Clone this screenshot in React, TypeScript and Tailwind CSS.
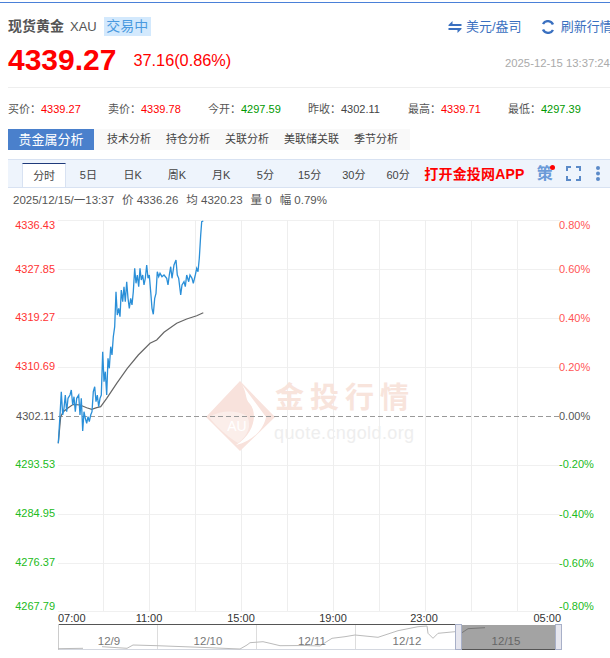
const sans = "font-['Liberation_Sans','Noto_Sans_CJK_SC',sans-serif]"

const stats = [
  { label: '买价：', value: '4339.27', color: 'text-[#f00]' },
  { label: '卖价：', value: '4339.78', color: 'text-[#f00]' },
  { label: '今开：', value: '4297.59', color: 'text-[#090]' },
  { label: '昨收：', value: '4302.11', color: 'text-[#444]' },
  { label: '最高：', value: '4339.71', color: 'text-[#f00]' },
  { label: '最低：', value: '4297.39', color: 'text-[#090]' },
]

const analysisTabs = ['技术分析', '持仓分析', '关联分析', '美联储关联', '季节分析']
const periods = ['分时', '5日', '日K', '周K', '月K', '5分', '15分', '30分', '60分']

// traced from the chart, in 3x crop coordinates with the origin at (40, 215)
const pricePts = [
  [55,685],[60,600],[64,530],[68,600],[72,580],[76,540],[80,590],[84,550],[90,540],[94,525],[98,570],[102,545],
  [106,590],[110,550],[116,540],[120,600],[124,550],[128,648],[132,590],[136,610],[140,625],[144,605],[148,620],
  [152,600],[156,590],[160,530],[164,515],[168,560],[172,540],[176,575],[180,550],[184,540],[188,410],[192,500],
  [196,470],[200,540],[204,430],[208,460],[212,395],[216,420],[220,365],[224,335],[228,230],[232,300],[236,280],
  [240,305],[244,225],[248,260],[252,215],[256,260],[260,200],[264,250],[268,280],[272,250],[276,270],[280,230],
  [284,160],[288,205],[292,180],[296,215],[300,160],[304,195],[308,180],[312,210],[316,190],[320,150],[324,190],
  [328,180],[332,230],[336,280],[340,298],[344,250],[348,235],[352,170],[356,185],[360,175],[366,185],[372,180],
  [380,190],[384,210],[388,180],[392,155],[396,190],[402,150],[408,135],[412,180],[416,190],[422,240],[426,210],
  [432,200],[436,215],[440,180],[446,200],[450,180],[456,190],[460,205],[466,180],[470,160],[474,170],[478,130],
  [482,60],[485,20],[490,18],
]
const avgPts = [
  [55,685],[62,605],[70,590],[85,578],[100,568],[120,570],[140,578],[155,583],[170,578],[182,575],[200,550],
  [230,505],[262,460],[295,420],[330,385],[350,375],[372,352],[410,325],[440,312],[470,302],[490,293],
]
const toLine = (pts: number[][]) => pts.map(([x, y]) => `${(40 + x / 3).toFixed(1)},${(215 + y / 3).toFixed(1)}`).join(' ')

const rows = [220, 269, 318, 367, 465, 514, 563, 611]
const cols = [103, 149, 195, 241, 287, 333, 379, 425, 471, 517]

const leftLabels = [
  { y: 229, t: '4336.43', c: '#f33' },
  { y: 273, t: '4327.85', c: '#f33' },
  { y: 321, t: '4319.27', c: '#f33' },
  { y: 370, t: '4310.69', c: '#f33' },
  { y: 420, t: '4302.11', c: '#555' },
  { y: 468, t: '4293.53', c: '#2b2' },
  { y: 517, t: '4284.95', c: '#2b2' },
  { y: 566, t: '4276.37', c: '#2b2' },
  { y: 610, t: '4267.79', c: '#2b2' },
]
const rightLabels = [
  { y: 229, t: '0.80%', c: '#f55' },
  { y: 273, t: '0.60%', c: '#f55' },
  { y: 322, t: '0.40%', c: '#f55' },
  { y: 371, t: '0.20%', c: '#f55' },
  { y: 420, t: '0.00%', c: '#555' },
  { y: 468, t: '-0.20%', c: '#2b2' },
  { y: 518, t: '-0.40%', c: '#2b2' },
  { y: 567, t: '-0.60%', c: '#2b2' },
  { y: 610, t: '-0.80%', c: '#2b2' },
]
const times = [
  { x: 58, t: '07:00', a: 'start' as const },
  { x: 149, t: '11:00', a: 'middle' as const },
  { x: 241, t: '15:00', a: 'middle' as const },
  { x: 333, t: '19:00', a: 'middle' as const },
  { x: 424, t: '23:00', a: 'middle' as const },
  { x: 561, t: '05:00', a: 'end' as const },
]
const navDays = [
  { x: 109, t: '12/9' },
  { x: 208, t: '12/10' },
  { x: 312, t: '12/11' },
  { x: 407, t: '12/12' },
  { x: 506, t: '12/15' },
]
const navLine =
  '102,646.7 127,648.3 133,645 157,645.7 200,647.3 240,649 247,645 250,642.7 263,641.7 270,643.3 280,645.7 305,645.5 320,646 325,642.7 332,638.3 345,636.7 355,635 378,637.3 398,630.7 418,626.7 427,626 428,633.3 433,638.3 438,633.3 455,631.7'

function Chart() {
  return (
    <svg width="610" height="444" viewBox="0 214 610 444" className="block">
      {rows.map((y) => (
        <line key={y} x1="58" x2="560" y1={y + 0.5} y2={y + 0.5} stroke="#f0f0f0" />
      ))}
      {cols.map((x) => (
        <line key={x} x1={x + 0.5} x2={x + 0.5} y1="220" y2="611" stroke="#eeeeee" />
      ))}

      {/* watermark */}
      <path d="M240 381 L275 417 L240 451 L206 417 Z" fill="#f8e2dc" />
      <path d="M240 382 C248 392 244 398 250 404 C258 414 254 434 236 445 C254 441 264 428 266 417 Z" fill="#ffffff" />
      <path d="M209 417 C222 410 236 410 247 416 C252 425 248 436 238 443 C226 436 216 426 209 417 Z" fill="#fbeeea" />
      <text x="237" y="431" textAnchor="middle" fontSize="14" fill="#ffffff" fontFamily="Liberation Sans">AU</text>
      <text x="275" y="408" fontSize="29" fontWeight="700" fill="#f8e4dc" letterSpacing="6" fontFamily="Noto Sans CJK SC">金投行情</text>
      <text x="274" y="439" fontSize="18" fill="#eeeeee" letterSpacing="0.4" fontFamily="Liberation Sans">quote.cngold.org</text>

      <line x1="58" x2="560" y1="416.5" y2="416.5" stroke="#999" strokeDasharray="5 3" />

      <polyline points={toLine(avgPts)} fill="none" stroke="#666" strokeWidth="1.2" />
      <polyline points={toLine(pricePts)} fill="none" stroke="#2a8fd8" strokeWidth="1.3" />

      <g fontSize="11" fontFamily="Liberation Sans">
        {leftLabels.map((l) => (
          <text key={l.t} x="55" y={l.y} textAnchor="end" fill={l.c}>{l.t}</text>
        ))}
        {rightLabels.map((l) => (
          <text key={l.t} x="559" y={l.y} fill={l.c}>{l.t}</text>
        ))}
        {times.map((l) => (
          <text key={l.t} x={l.x} y="622" textAnchor={l.a} fill="#333">{l.t}</text>
        ))}
      </g>

      {/* range navigator */}
      <rect x="462" y="625" width="93" height="24" fill="#a3a3a3" />
      <line x1="58" x2="456" y1="624.5" y2="624.5" stroke="#555" />
      <line x1="58" x2="456" y1="649.5" y2="649.5" stroke="#d4d8e0" />
      <line x1="58.5" x2="58.5" y1="624" y2="650" stroke="#ccc" />
      {[157, 256, 355].map((x) => (
        <line key={x} x1={x + 0.5} x2={x + 0.5} y1="625" y2="649" stroke="#ddd" />
      ))}
      <polyline points="58,648.7 83,648.3" fill="none" stroke="#bbb" strokeWidth="1" />
      <polyline points={navLine} fill="none" stroke="#bbb" strokeWidth="1" />
      <polyline points="462,632.7 468,628.7 485,627.7" fill="none" stroke="#777" strokeWidth="1" />
      <line x1="462" x2="555" y1="649.5" y2="649.5" stroke="#555" />
      <rect x="455.5" y="624.5" width="6" height="25" fill="#e6e6ee" stroke="#a8b0c8" />
      <rect x="555.5" y="624.5" width="6" height="25" fill="#e6e6ee" stroke="#a8b0c8" />
      <g fontSize="11.5" fontFamily="Liberation Sans" textAnchor="middle" fill="#777">
        {navDays.map((d) => (
          <text key={d.t} x={d.x} y="645" fill={d.t === '12/15' ? '#666' : '#777'}>{d.t}</text>
        ))}
      </g>
    </svg>
  )
}

export default function App() {
  return (
    <div className={`w-[610px] h-[658px] overflow-hidden bg-white ${sans}`}>
      <div className="mt-[2px] h-px bg-[#4a80d8]" />

      <div className="flex justify-between pl-2 pt-[14px] whitespace-nowrap">
        <div className="flex items-center h-[19px]">
          <span className="text-[14px] text-[#555] font-bold">现货黄金</span>
          <span className="text-[13px] text-[#555] ml-[6px]">XAU</span>
          <span className="ml-[7px] h-[19px] w-[47px] bg-[#d3e9fd] text-[#4a9ae0] text-[14px] leading-[19px] text-center">交易中</span>
        </div>
        <div className="flex items-center h-[19px] w-[162px] shrink-0 text-[13px] text-[#3a70c0]">
          <svg width="14" height="12" viewBox="0 0 14 12" className="shrink-0 mr-[4px]" fill="#3a70c0">
            <path d="M4.5 0 L0.5 4 L0.5 5 L13.5 5 L13.5 3 L4.5 3 Z" />
            <path d="M9.5 12 L13.5 8 L13.5 7 L0.5 7 L0.5 9 L9.5 9 Z" />
          </svg>
          <span>美元/盎司</span>
          <svg width="14" height="14" viewBox="0 0 14 14" className="shrink-0 ml-[19px] mr-[6px]" fill="none" stroke="#3a70c0" strokeWidth="2.4">
            <path d="M2 4 A5.6 5.6 0 0 1 12 4.5" />
            <path d="M12 10 A5.6 5.6 0 0 1 2 9.5" />
          </svg>
          <span>刷新行情</span>
        </div>
      </div>

      <div className="flex items-center justify-between pl-2 mt-[6px] h-[36px] whitespace-nowrap">
        <div className="flex items-center">
          <span className="text-[30px] leading-none font-bold text-[#f00]">4339.27</span>
          <span className="ml-[17px] text-[16.3px] text-[#f00]">37.16(0.86%)</span>
        </div>
        <span className="text-[11.3px] text-[#aaa] mt-[6px] w-[105px] shrink-0">2025-12-15 13:37:24</span>
      </div>

      <div className="h-px bg-[#eee] ml-2 mt-[9px]" />

      <div className="flex pl-2 mt-[13px] h-[16px] items-center whitespace-nowrap text-[11px]">
        {stats.map((s) => (
          <div key={s.label} className="w-[100px] text-[#555]">
            {s.label}
            <span className={s.color}>{s.value}</span>
          </div>
        ))}
      </div>

      <div className="flex items-center ml-2 mt-[12px] h-[21px] w-[402px] bg-[#f9f9f9] whitespace-nowrap text-[11px] text-[#444]">
        <div className="w-[86px] h-[21px] bg-[#4a80cc] text-white text-[13px] leading-[21px] text-center">贵金属分析</div>
        {analysisTabs.map((t, i) => (
          <span key={t} className={i === 0 ? 'ml-[13px]' : 'ml-[15px]'}>{t}</span>
        ))}
      </div>

      <div className="flex ml-2 mt-[9px] h-[29px] pl-[14px] bg-[#eef4fc] border-y border-[#d8e2f2] whitespace-nowrap text-[11px] text-[#444]">
        {periods.map((p, i) => (
          <div
            key={p}
            className={
              i === 0
                ? 'w-[44.25px] h-[24px] mt-[3px] bg-white border-t border-x border-t-[#1f3a7a] border-x-[#d8e2f2] text-center leading-[24px]'
                : 'w-[44.25px] h-[24px] mt-[3px] text-center leading-[24px]'
            }
          >
            {p}
          </div>
        ))}
        <span className="ml-[4px] mt-[4px] text-[14px] font-bold text-[#f00] leading-[20px] tracking-[0.2px]">打开金投网APP</span>
        <span className="relative ml-[12px] mt-[3px] text-[16px] font-bold text-[#6a9ad8] leading-[22px]">
          策
          <span className="absolute -right-[2px] top-[2px] w-[5px] h-[5px] rounded-full bg-[#f00]" />
        </span>
        <svg width="15" height="15" viewBox="0 0 15 15" className="ml-[13px] mt-[6px] shrink-0" fill="none" stroke="#5b8ac8" strokeWidth="2">
          <path d="M1 5 V1 H5 M10 1 H14 V5 M14 10 V14 H10 M5 14 H1 V10" />
        </svg>
        <svg width="4" height="15" viewBox="0 0 4 15" className="ml-[15px] mt-[6px] shrink-0" fill="#5b8ac8">
          <circle cx="2" cy="2" r="2" />
          <circle cx="2" cy="7.5" r="2" />
          <circle cx="2" cy="13" r="2" />
        </svg>
      </div>

      <div className="flex h-[26px] items-center pl-[13px] whitespace-nowrap text-[11.5px] text-[#555]">
        <span>2025/12/15/一13:37</span>
        <span className="ml-2">价 4336.26</span>
        <span className="ml-2">均 4320.23</span>
        <span className="ml-2">量 0</span>
        <span className="ml-2">幅 0.79%</span>
      </div>

      <Chart />
    </div>
  )
}
